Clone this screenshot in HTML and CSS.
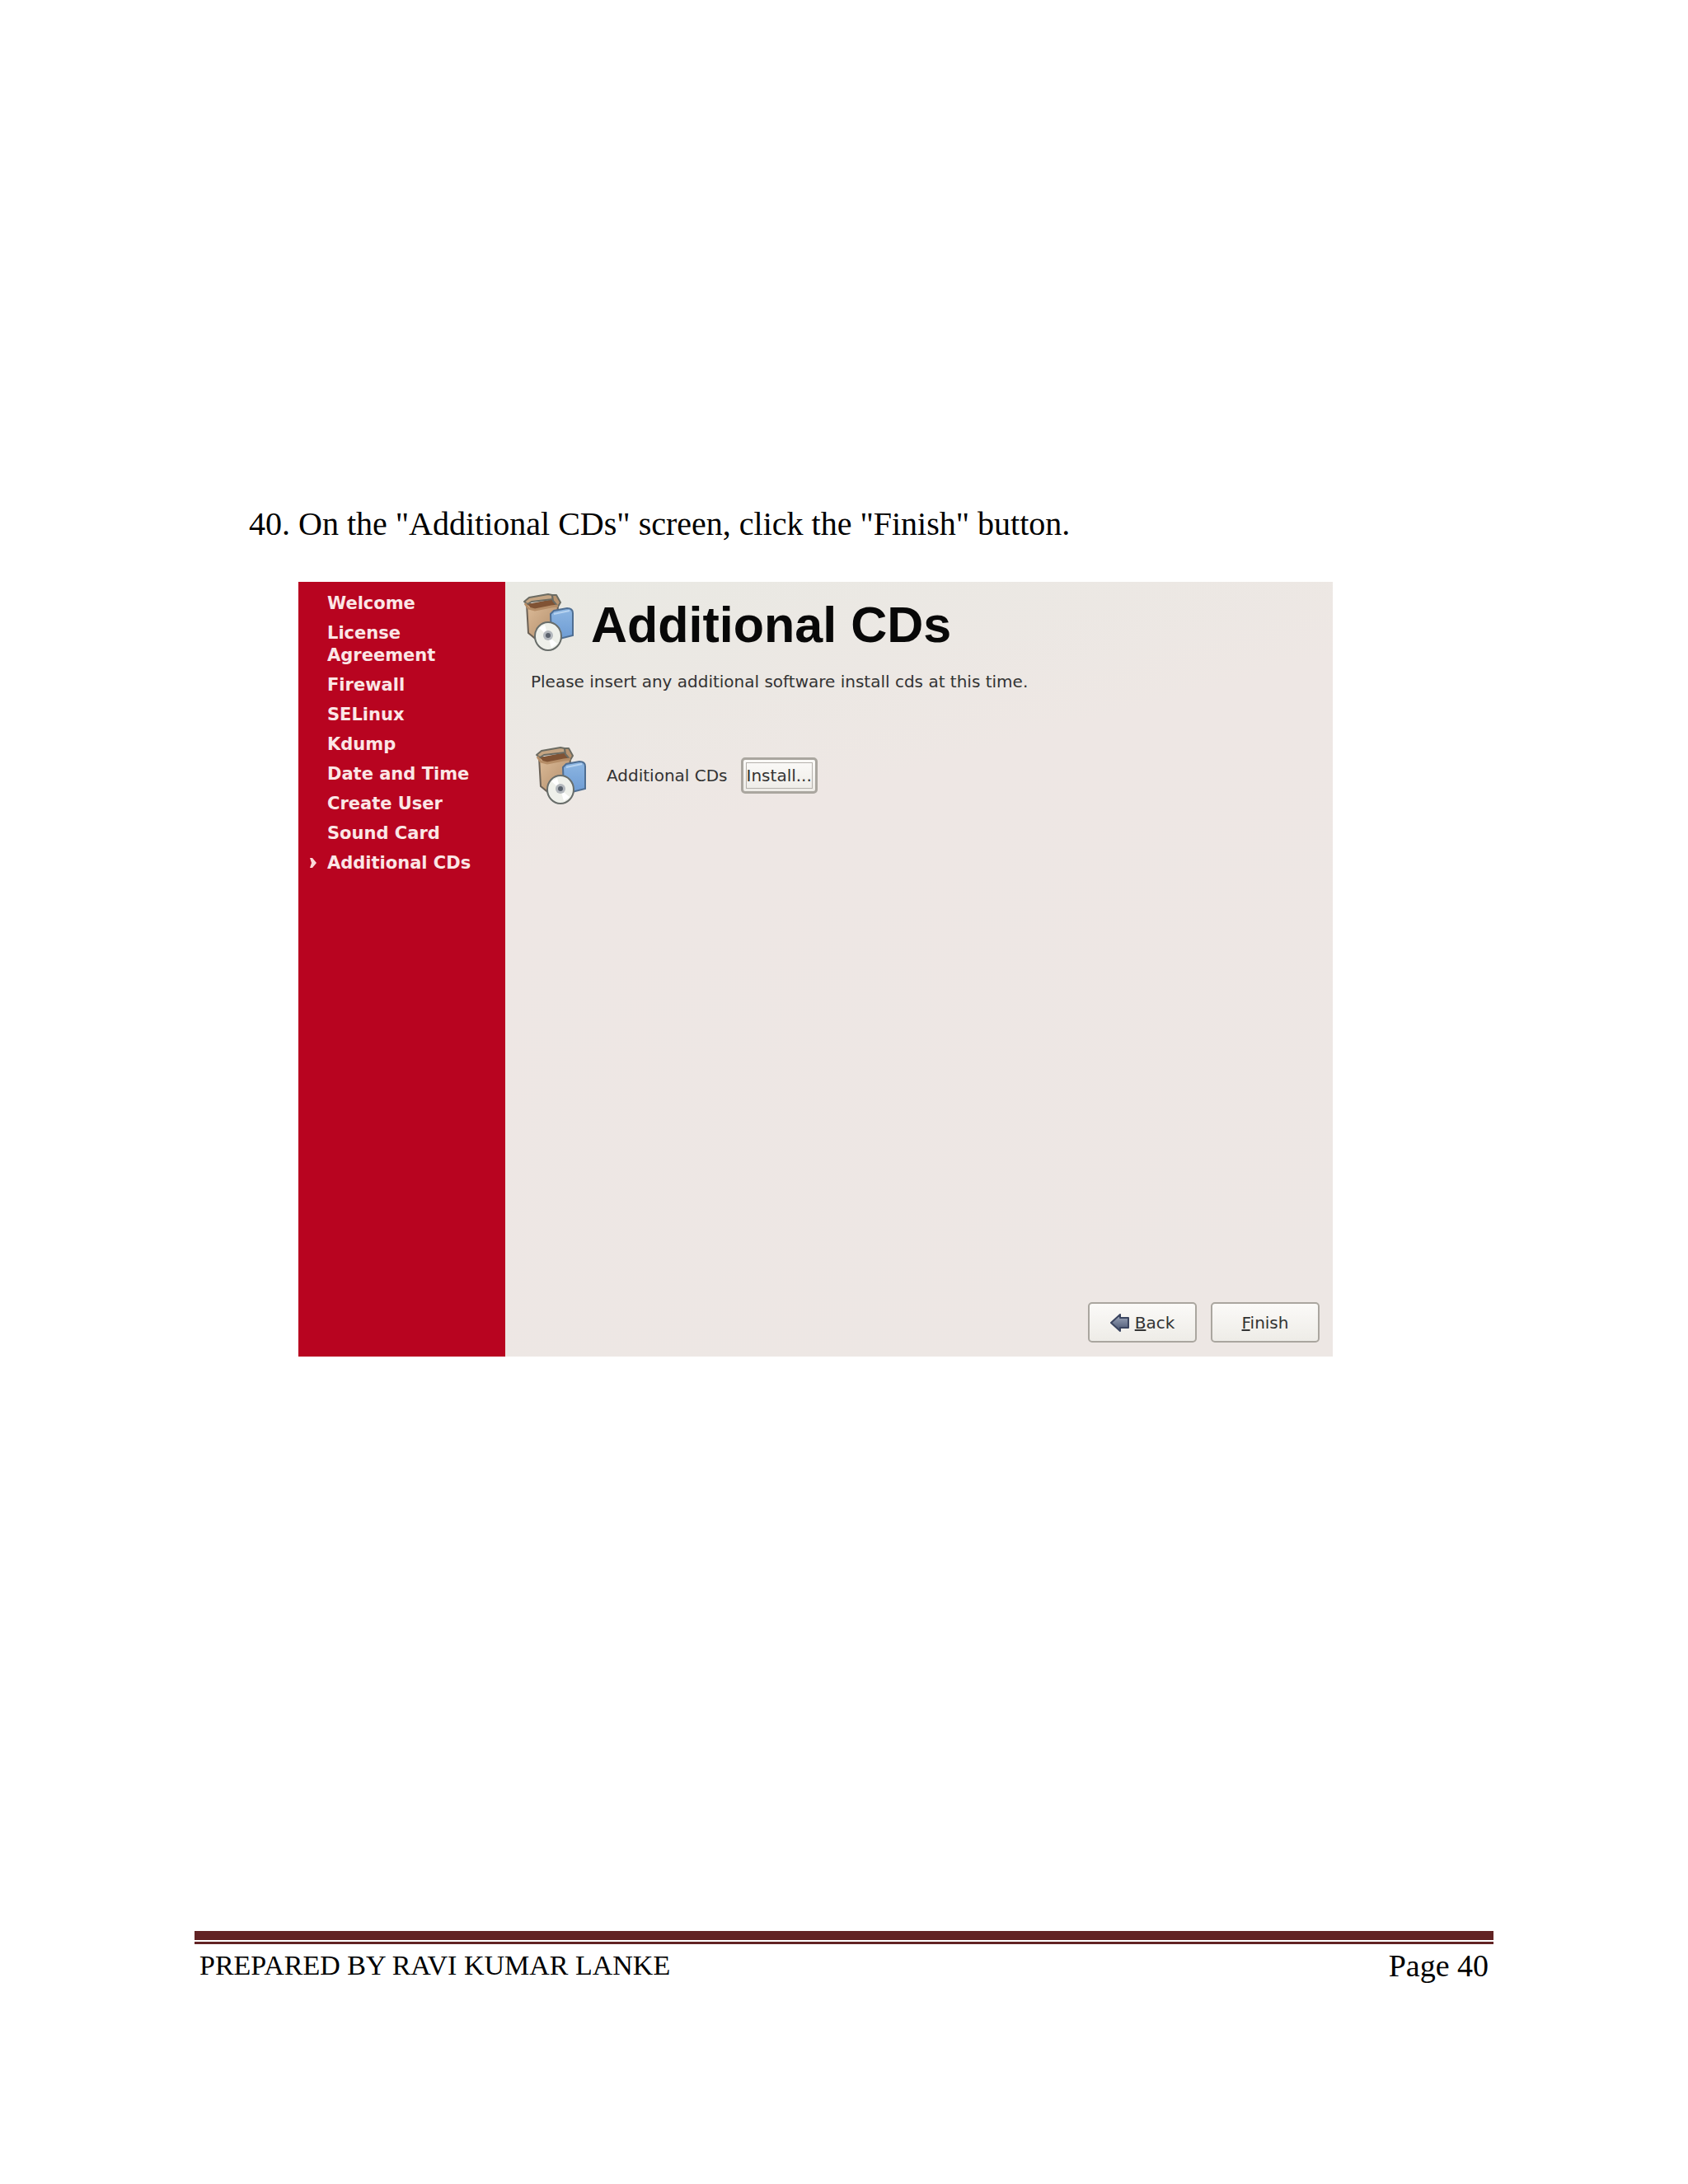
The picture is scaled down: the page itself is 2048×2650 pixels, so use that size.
FILE: index.html
```html
<!DOCTYPE html>
<html lang="en">
<head>
    <meta charset="UTF-8">
    <meta name="viewport" content="width=device-width, initial-scale=1.0">
    <title>Additional CDs</title>
    <link rel="stylesheet" href="styles.css">
</head>
<body>
    <!-- Package icon, used in the title and in the install row -->
    <svg class="defs" aria-hidden="true">
        <defs>
            <linearGradient id="box-fill" x1="0" y1="0" x2="1" y2="1">
                <stop offset="0" stop-color="#dcbb98"/>
                <stop offset="1" stop-color="#b08b68"/>
            </linearGradient>
            <linearGradient id="case-fill" x1="0" y1="0" x2="0" y2="1">
                <stop offset="0" stop-color="#8db6e2"/>
                <stop offset="1" stop-color="#6e9cd4"/>
            </linearGradient>
            <linearGradient id="arrow-fill" x1="0" y1="0" x2="0" y2="1">
                <stop offset="0" stop-color="#a3adc0"/>
                <stop offset="1" stop-color="#46526f"/>
            </linearGradient>
        </defs>
        <symbol id="package" viewBox="0 0 62 70">
            <path d="M4 13 L6 48 L17 57 L40 48 L42 14 Z" fill="url(#box-fill)" stroke="#6b6156" stroke-width="2"/>
            <path d="M5 13 L36 7 L42 14 L11 20 Z" fill="#805334"/>
            <path d="M5 13 L1 10 L7 5 L30 1 L35 2 L36 7 L10 10 Z" fill="#c5a583" stroke="#6b6b62" stroke-width="2" stroke-linejoin="round"/>
            <path d="M35 2 L40 2 L45 11 L42 16 L36 9 Z" fill="#b99470" stroke="#6b6b62" stroke-width="2" stroke-linejoin="round"/>
            <path d="M2 12 L6 18 L14 20 L34 16 L42 15" fill="none" stroke="#b58d67" stroke-width="3"/>
            <path d="M33 25 L37 21 L53 18 Q60 18 60 24 L60 51 L44 55 L34 54 Z" fill="url(#case-fill)" stroke="#4f6e92" stroke-width="2"/>
            <path d="M37 25 L56 21" stroke="#b7d3f0" stroke-width="2"/>
            <ellipse cx="30" cy="52" rx="16" ry="17" fill="#eef0ea" stroke="#686d6a" stroke-width="2"/>
            <path d="M30 52 L19 42 L26 38 Z M30 52 L41 61 L34 66 Z" fill="#ffffff"/>
            <circle cx="30" cy="51" r="6" fill="#b3b8bd"/>
            <circle cx="30" cy="51" r="3" fill="#59616c"/>
        </symbol>
    </svg>

    <div class="page">
        <ol class="steps" start="40">
            <li>On the "Additional CDs" screen, click the "Finish" button.</li>
        </ol>

        <div class="installer">
            <nav class="sidebar">
                <ul>
                    <li>Welcome</li>
                    <li>License Agreement</li>
                    <li>Firewall</li>
                    <li>SELinux</li>
                    <li>Kdump</li>
                    <li>Date and Time</li>
                    <li>Create User</li>
                    <li>Sound Card</li>
                    <li class="current" aria-current="step">
                        <svg class="marker" viewBox="0 0 8 12" aria-hidden="true"><path d="M0 0 L3 0 L8 6 L3 12 L0 12 L2 6 Z" fill="#fbd9d9"/></svg>
                        Additional CDs
                    </li>
                </ul>
            </nav>

            <main class="content">
                <div class="title">
                    <svg class="package" aria-hidden="true"><use href="#package"/></svg>
                    <h1>Additional CDs</h1>
                </div>
                <p class="message">Please insert any additional software install cds at this time.</p>
                <div class="install-row">
                    <svg class="package" aria-hidden="true"><use href="#package"/></svg>
                    <label for="install">Additional CDs</label>
                    <button type="button" id="install" class="install-btn"><span>Install...</span></button>
                </div>
                <div class="actions">
                    <button type="button">
                        <svg class="arrow" viewBox="0 0 24 24" aria-hidden="true"><path d="M1 12 L12 2 L12 6 L22 6 L22 18 L12 18 L12 22 Z" fill="url(#arrow-fill)" stroke="#3b4560" stroke-width="2" stroke-linejoin="round"/></svg>
                        <span><u>B</u>ack</span>
                    </button>
                    <button type="button"><span><u>F</u>inish</span></button>
                </div>
            </main>
        </div>

        <footer class="footer">
            <span>PREPARED BY RAVI KUMAR LANKE</span>
            <span class="page-number">Page 40</span>
        </footer>
    </div>
</body>
</html>
```

FILE: styles.css
```css
/* General Styling */
* {
    margin: 0;
    padding: 0;
    box-sizing: border-box;
}

body {
    background-color: #ffffff;
    color: #000000;
    font-family: "Liberation Serif", "Times New Roman", serif;
}

.defs {
    position: absolute;
    width: 0;
    height: 0;
}

.page {
    display: flex;
    flex-direction: column;
    min-height: 100vh;
    padding: 612px 236px 244px;
}

.steps {
    padding-left: 126px;
    margin-bottom: 46px;
    font-size: 40px;
    line-height: 48px;
}

/* Installer Window */
.installer {
    display: flex;
    min-height: 940px;
    margin: 0 195px 0 126px;
    font-family: "DejaVu Sans", Verdana, sans-serif;
}

.sidebar {
    flex: 0 0 20%;
    padding: 13px 32px 14px 35px;
    background-color: #b80420;
    color: #fbe6e6;
    font-size: 21px;
    font-weight: bold;
    line-height: 27px;
}

.sidebar ul {
    display: flex;
    flex-direction: column;
    gap: 9px;
    list-style: none;
}

.sidebar li {
    position: relative;
}

.marker {
    position: absolute;
    top: 7px;
    left: -21px;
    width: 8px;
    height: 12px;
}

.current {
    white-space: nowrap;
}

.content {
    display: flex;
    flex: 1;
    flex-direction: column;
    padding: 14px 16px 17px;
    background: linear-gradient(165deg, #e9e9e3, #eee7e4 30%, #ede7e4);
    color: #333333;
    font-size: 20px;
}

.title {
    display: flex;
    gap: 20px;
    padding-left: 6px;
}

.package {
    width: 62px;
    height: 70px;
}

h1 {
    color: #080808;
    font-family: "Liberation Sans", Arial, sans-serif;
    font-size: 61px;
    line-height: 76px;
}

.message {
    padding: 18px 15px 0;
    line-height: 26px;
}

.install-row {
    display: flex;
    align-items: center;
    gap: 16px;
    padding: 66px 21px 0;
}

.install-row label {
    padding-left: 8px;
}

/* Button Styling */
button {
    display: flex;
    justify-content: center;
    align-items: center;
    gap: 6px;
    min-width: 132px;
    height: 49px;
    border: 2px solid #aaa69f;
    border-radius: 5px;
    background: linear-gradient(#fbfaf8, #eeece7);
    color: #333333;
    font-family: inherit;
    font-size: 20px;
}

.install-btn {
    min-width: 0;
    height: 44px;
    padding: 3px;
    border-width: 3px;
}

.install-btn span {
    border: 1px solid #b5b1ac;
    line-height: 30px;
}

.arrow {
    width: 24px;
    height: 24px;
}

.actions {
    display: flex;
    justify-content: flex-end;
    gap: 17px;
    margin-top: auto;
}

/* Footer Styling */
.footer {
    position: relative;
    display: flex;
    justify-content: space-between;
    margin-top: auto;
    padding: 10px 6px 0;
    border-top: 11px solid #622324;
    font-size: 34px;
    line-height: 42px;
}

.footer::before {
    content: "";
    position: absolute;
    top: 2px;
    left: 0;
    right: 0;
    height: 3px;
    background-color: #622324;
}

.page-number {
    font-size: 38px;
}
```
